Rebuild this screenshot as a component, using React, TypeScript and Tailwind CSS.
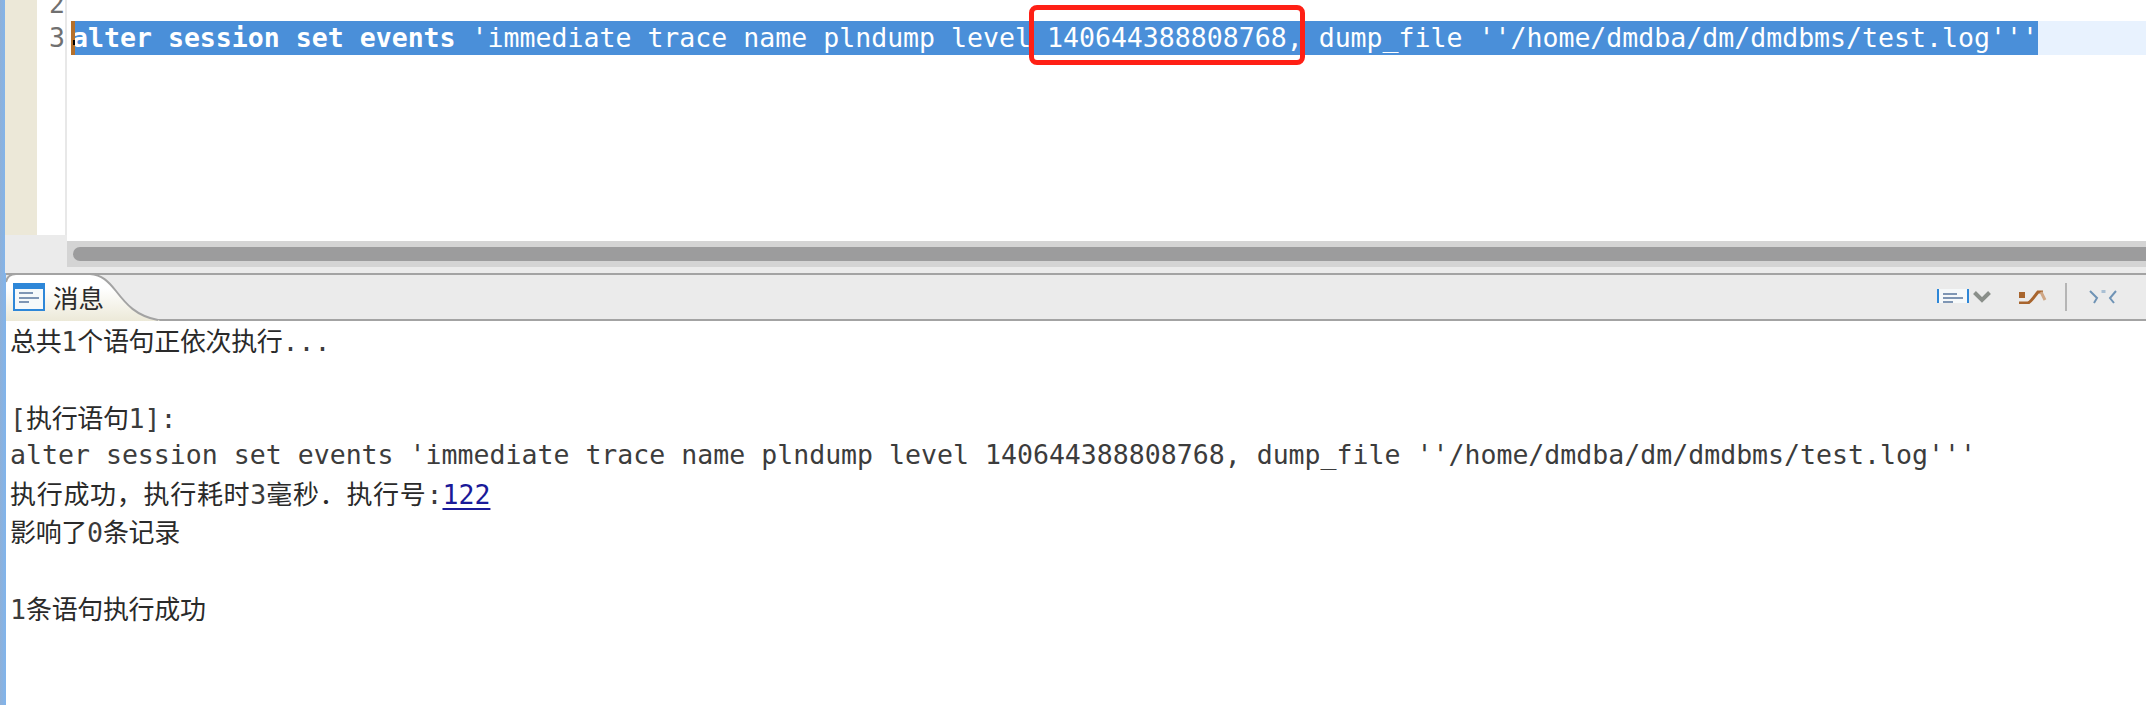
import React from "react";

const SQL_REST =
  "'immediate trace name plndump level 140644388808768, dump_file ''/home/dmdba/dm/dmdbms/test.log'''";

function Mixed({ text, wide = false }: { text: string; wide?: boolean }) {
  const parts = text.split(/([\u3000-\u9fff\uff00-\uffef]+)/);
  const cjk = wide
    ? "text-[26px] tracking-[0.7px] text-[#2a2a2a] [font-family:'Noto_Sans_CJK_SC',sans-serif]"
    : "text-[26px] tracking-[-0.35px] text-[#2a2a2a] [font-family:'Noto_Sans_CJK_SC',sans-serif]";
  return (
    <>
      {parts.map((p, i) =>
        i % 2 === 1 ? (
          <span key={i} className={cjk}>
            {p}
          </span>
        ) : (
          <span key={i}>{p}</span>
        ),
      )}
    </>
  );
}

function MsgLine({ children }: { children?: React.ReactNode }) {
  return <div className="h-[38.3px] leading-[38.3px] whitespace-pre">{children}</div>;
}

export default function App() {
  return (
    <div className="flex h-[705px] w-[2146px] overflow-hidden bg-white [font-family:'DejaVu_Sans_Mono','Noto_Sans_CJK_SC',monospace] text-[26.55px]">
      <div className="w-[5px] shrink-0 bg-gradient-to-r from-[#8fb0d8] to-[#82b4ea]" />
      <div className="flex min-w-0 flex-1 flex-col">
        {/* editor */}
        <div className="flex h-[273px] bg-[#ebebeb]">
          <div className="w-[62px] shrink-0">
            <div className="flex h-[235px]">
              <div className="w-[32px] bg-[#ece8d8]" />
              <div className="flex w-[30px] flex-col items-end overflow-hidden border-r-2 border-[#e8e8e8] bg-white text-[#707070]">
                <div className="-mt-[13px] h-[34px] leading-[34px]">2</div>
                <div className="h-[34px] leading-[34px]">3</div>
              </div>
            </div>
          </div>
          <div className="flex min-w-0 flex-1 flex-col">
            <div className="relative h-[241px] bg-white pl-[4px] pt-[21px]">
              <div className="relative flex h-[34px] bg-[#e8f2fe] leading-[34px] whitespace-pre text-white">
                <div className="bg-[#4a8fd9] pl-[1px]">
                  <b className="font-bold">alter session set events </b>
                  {SQL_REST}
                </div>
                <span className="absolute left-0 top-0 h-[34px] w-[4px] bg-[#b5702a]" />
                <span className="absolute left-[2px] top-[19px] h-[5px] w-[2px] bg-black" />
              </div>
              <div className="absolute left-[962px] top-[5px] h-[60px] w-[276px] rounded-[8px] border-[5px] border-[#ff2015]" />
            </div>
            <div className="h-[26px] bg-[#d4d4d4] py-[6px] pl-[6px]">
              <div className="h-[14px] rounded-l-[7px] bg-[#9c9c9d]" />
            </div>
          </div>
        </div>

        <div className="flex min-h-0 flex-1 flex-col border-l border-[#82b4ea]">
          {/* tab bar */}
          <div className="relative flex h-[48px] shrink-0 border-y-2 border-[#a3a3a3] bg-[#ebebeb]">
            <div className="relative -mb-[2px] -mt-[2px] flex w-[154px] shrink-0 items-center pl-[7px]">
              <svg className="absolute left-0 top-0" width="154" height="48" viewBox="0 0 154 48" fill="none">
                <defs>
                  <linearGradient id="tabfill" x1="0" y1="0" x2="0" y2="1">
                    <stop offset="0.3" stopColor="#ffffff" />
                    <stop offset="1" stopColor="#ece9d8" />
                  </linearGradient>
                </defs>
                <path
                  d="M0 48V9C1 4 5 1 10 1H84C96 2 102 8 110 18C120 31 130 43 152 47L154 48Z"
                  fill="url(#tabfill)"
                />
                <path
                  d="M0 9C1 4 5 1 10 1H84C96 2 102 8 110 18C120 31 130 43 152 47"
                  stroke="#a3a3a3"
                  strokeWidth="2"
                />
              </svg>
              <svg className="relative" width="32" height="28" viewBox="0 0 32 28">
                <rect width="32" height="28" fill="#2e87d8" />
                <rect x="2" y="6" width="28" height="20" fill="#f6f9fa" />
                <rect x="6" y="9" width="14" height="2" fill="#7f96b4" />
                <rect x="6" y="14" width="20" height="2" fill="#7f96b4" />
                <rect x="6" y="18" width="10" height="2" fill="#7f96b4" />
              </svg>
              <span className="relative ml-[8px] text-[25.5px] leading-none text-[#2a2a2a] [font-family:'Noto_Sans_CJK_SC',sans-serif]">
                消息
              </span>
            </div>
            <div className="ml-auto flex items-center pr-[29px]">
              <svg width="32" height="14" viewBox="0 0 32 14" className="mt-[-2px]">
                <rect width="32" height="14" fill="#f6f9fa" />
                <rect width="2" height="14" fill="#2e87d8" />
                <rect x="30" width="2" height="14" fill="#2e87d8" />
                <rect x="6" y="4" width="14" height="2" fill="#7f96b4" />
                <rect x="6" y="8" width="20" height="2" fill="#7f96b4" />
                <rect x="6" y="12" width="10" height="2" fill="#7f96b4" />
              </svg>
              <svg width="18" height="12" viewBox="0 0 18 12" className="ml-[4px]">
                <path d="M1.5 1.5L9 9L16.5 1.5" fill="none" stroke="#8a8f8a" strokeWidth="4" />
              </svg>
              <svg width="28" height="14" viewBox="0 0 28 14" className="ml-[28px]">
                <rect y="2" width="6" height="6" fill="#a8652e" />
                <path d="M0 13H9C12 12 15 7 19 2H24" fill="none" stroke="#a8652e" strokeWidth="3" />
                <path d="M22 2L26 10" fill="none" stroke="#cfa786" strokeWidth="3" />
              </svg>
              <div className="ml-[18px] h-[28px] w-[2px] bg-[#b5b5b5]" />
              <svg width="28" height="14" viewBox="0 0 28 14" className="ml-[22px]">
                <path d="M1 1L8 8L5 13" fill="none" stroke="#6f93b5" strokeWidth="2" />
                <path d="M27 1L21 8L25 13" fill="none" stroke="#6f93b5" strokeWidth="2" />
                <rect x="12.5" y="0" width="4" height="3" fill="#a9bfd3" />
              </svg>
            </div>
          </div>

          {/* messages */}
          <div className="flex-1 pl-[4px] text-[#3c3c3c]">
            <MsgLine>
              <Mixed text="总共1个语句正依次执行..." />
            </MsgLine>
            <MsgLine />
            <MsgLine>
              <Mixed text="[执行语句1]:" />
            </MsgLine>
            <MsgLine>alter session set events {SQL_REST}</MsgLine>
            <MsgLine>
              <Mixed text="执行成功，执行耗时3毫秒．执行号:" wide />
              <span className="text-[#1a1a99] underline decoration-2 underline-offset-[4px]">122</span>
            </MsgLine>
            <MsgLine>
              <Mixed text="影响了0条记录" />
            </MsgLine>
            <MsgLine />
            <MsgLine>
              <Mixed text="1条语句执行成功" />
            </MsgLine>
          </div>
        </div>
      </div>
    </div>
  );
}
